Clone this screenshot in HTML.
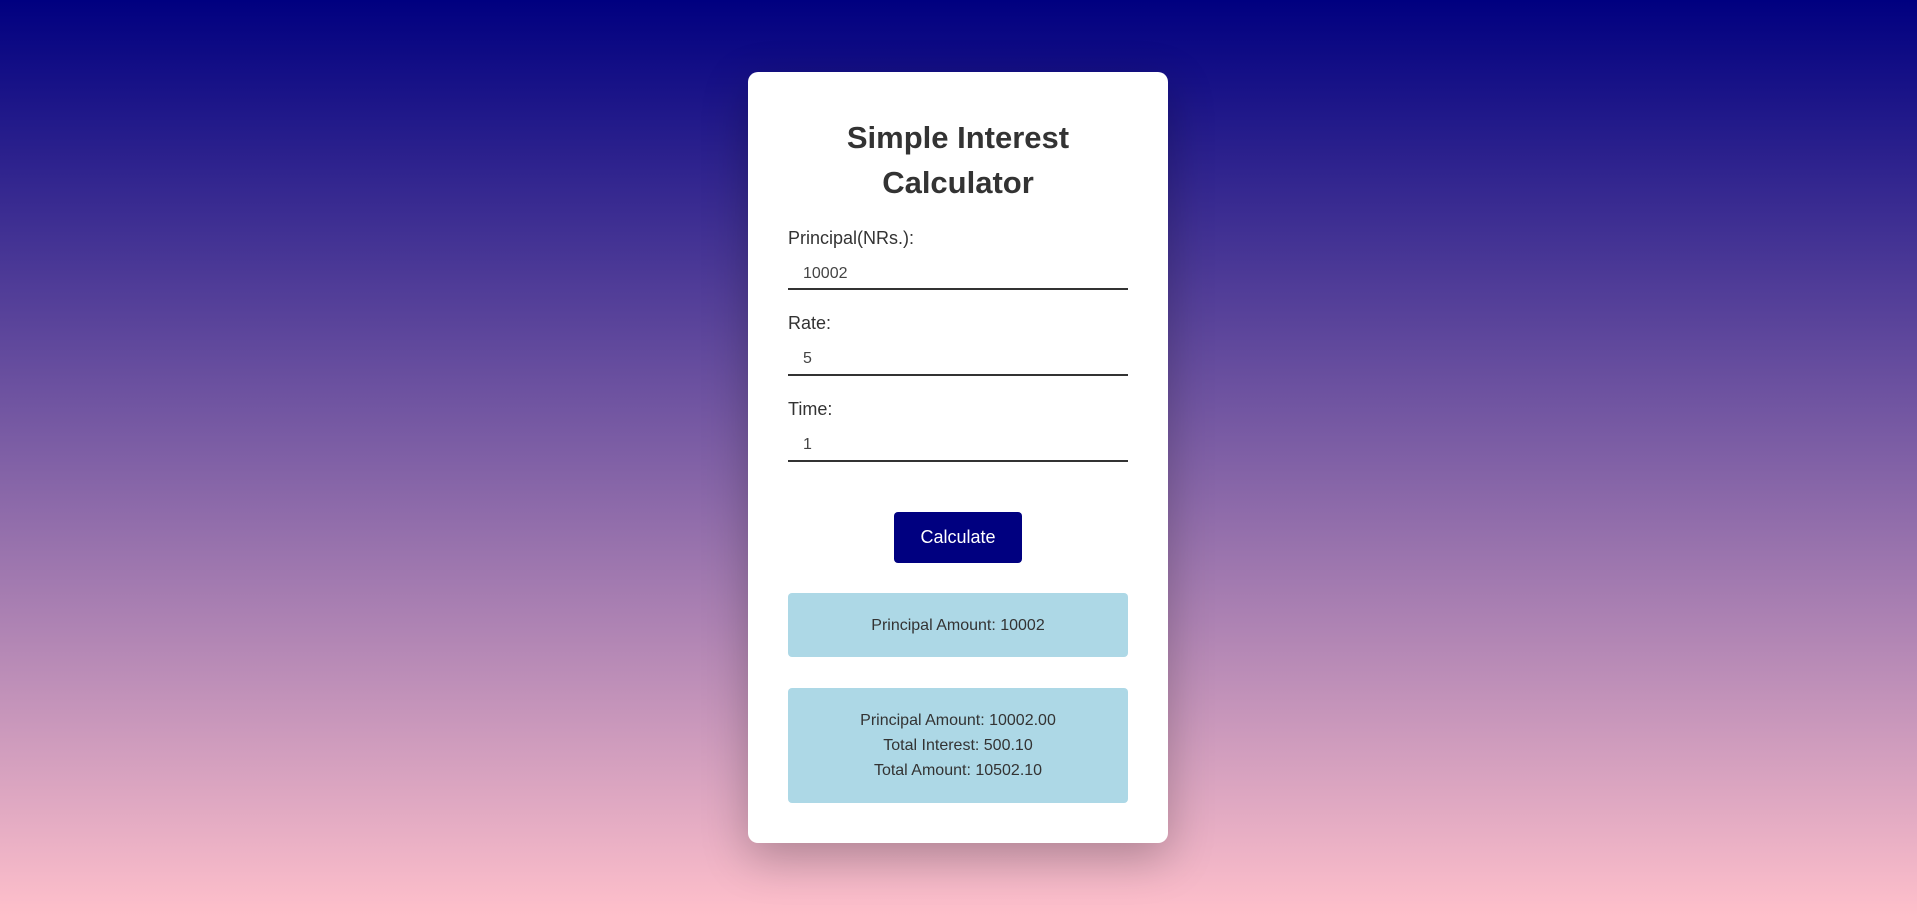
<!DOCTYPE html>
<html><head><meta charset="utf-8"><style>
*{margin:0;padding:0;box-sizing:border-box}
html,body{width:1917px;height:917px;overflow:hidden}
body{background:linear-gradient(to bottom,#000080 0%,#ffc0cb 100%);font-family:"Liberation Sans",sans-serif;color:#333;position:relative}
.card{position:absolute;left:748px;top:72px;width:420px;height:771px;background:#fff;border-radius:10px;box-shadow:0 15px 45px rgba(0,0,0,0.25)}
.t{position:absolute;left:0;width:420px;text-align:center;font-weight:bold;font-size:31px;color:#333}
.lab{position:absolute;left:40px;font-size:18px;color:#333}
.val{position:absolute;left:55px;font-size:16px;color:#444}
.line{position:absolute;left:40px;width:340px;height:2px;background:#333}
.btn{position:absolute;left:146px;top:440px;width:128px;height:51px;background:#000080;border-radius:4px;color:#fff;font-size:18px;text-align:center;line-height:51px}
.res{position:absolute;left:40px;width:340px;background:#add8e6;border-radius:4px;text-align:center;font-size:16px;color:#333;line-height:25px}
</style></head><body>
<div class="card">
<div class="t" style="top:48px">Simple Interest</div>
<div class="t" style="top:93px">Calculator</div>
<div class="lab" style="top:156px">Principal(NRs.):</div>
<div class="val" style="top:193px">10002</div>
<div class="line" style="top:216px"></div>
<div class="lab" style="top:241px">Rate:</div>
<div class="val" style="top:278px">5</div>
<div class="line" style="top:302px"></div>
<div class="lab" style="top:327px">Time:</div>
<div class="val" style="top:364px">1</div>
<div class="line" style="top:388px"></div>
<div class="btn">Calculate</div>
<div class="res" style="top:521px;height:64px;padding-top:20px">Principal Amount: 10002</div>
<div class="res" style="top:616px;height:115px;padding-top:20px">Principal Amount: 10002.00<br>Total Interest: 500.10<br>Total Amount: 10502.10</div>
</div>
</body></html>
